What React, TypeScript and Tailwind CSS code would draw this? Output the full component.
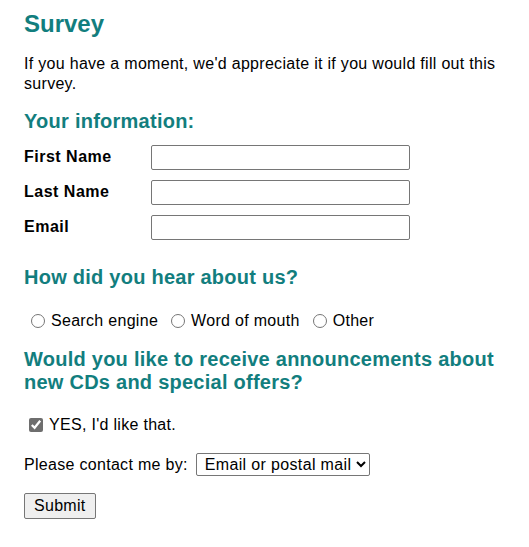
import React from 'react';

const teal = 'text-[#127e7e]';

export default function App() {
  return (
    <div className="min-h-screen bg-white px-6 pt-2 text-[16px] leading-[1.15] tracking-[0.3px] text-black font-['Liberation_Sans',Arial,sans-serif]">
      <h1 className={`${teal} mt-[2px] text-[24px] font-bold tracking-normal`}>Survey</h1>
      <p className="mt-[16px] leading-[20px]">
        If you have a moment, we'd appreciate it if you would fill out this survey.
      </p>

      <form onSubmit={(e) => e.preventDefault()}>
        <h2 className={`${teal} mt-[16px] text-[20px] font-bold tracking-[0.25px]`}>Your information:</h2>
        <div className="mt-[12px] grid grid-cols-[127px_258px] gap-y-[10px] items-center">
          {['First Name', 'Last Name', 'Email'].map((l) => (
            <React.Fragment key={l}>
              <label className="font-bold tracking-[0.5px]">{l}</label>
              <input
                type="text"
                className="h-[25px] w-[259px] rounded-[2px] border border-[#767676] bg-white px-1"
              />
            </React.Fragment>
          ))}
        </div>

        <h2 className={`${teal} mt-[26px] text-[20px] font-bold tracking-[0.25px]`}>How did you hear about us?</h2>
        <div className="mt-[23px] flex items-center pl-[7px]">
          {['Search engine', 'Word of mouth', 'Other'].map((o) => (
            <label key={o} className="mr-[13px] flex items-center">
              <input type="radio" name="hear" className="m-0 mr-[6px] h-[14px] w-[14px]" />
              {o}
            </label>
          ))}
        </div>

        <h2 className={`${teal} mt-[18px] text-[20px] font-bold tracking-[0.25px]`}>
          Would you like to receive announcements about new CDs and special offers?
        </h2>
        <label className="mt-[22px] flex items-center pl-[5px]">
          <input
            type="checkbox"
            defaultChecked
            className="m-0 mr-[6px] h-[14px] w-[14px] accent-[#6e6e6e]"
          />
          YES, I'd like that.
        </label>

        <div className="mt-[19px] flex items-center">
          <span className="mr-[8px]">Please contact me by:</span>
          <select className="h-[23px] rounded-[2px] border border-[#767676] bg-white pl-[4px] pr-[1px] text-[16px] tracking-[0.35px]">
            <option>Email or postal mail</option>
            <option>Email only</option>
            <option>Postal mail only</option>
          </select>
        </div>

        <button
          type="submit"
          className="mt-[17px] h-[26px] rounded-[2px] border border-[#767676] bg-[#efefef] px-[9px]"
        >
          Submit
        </button>
      </form>
    </div>
  );
}
